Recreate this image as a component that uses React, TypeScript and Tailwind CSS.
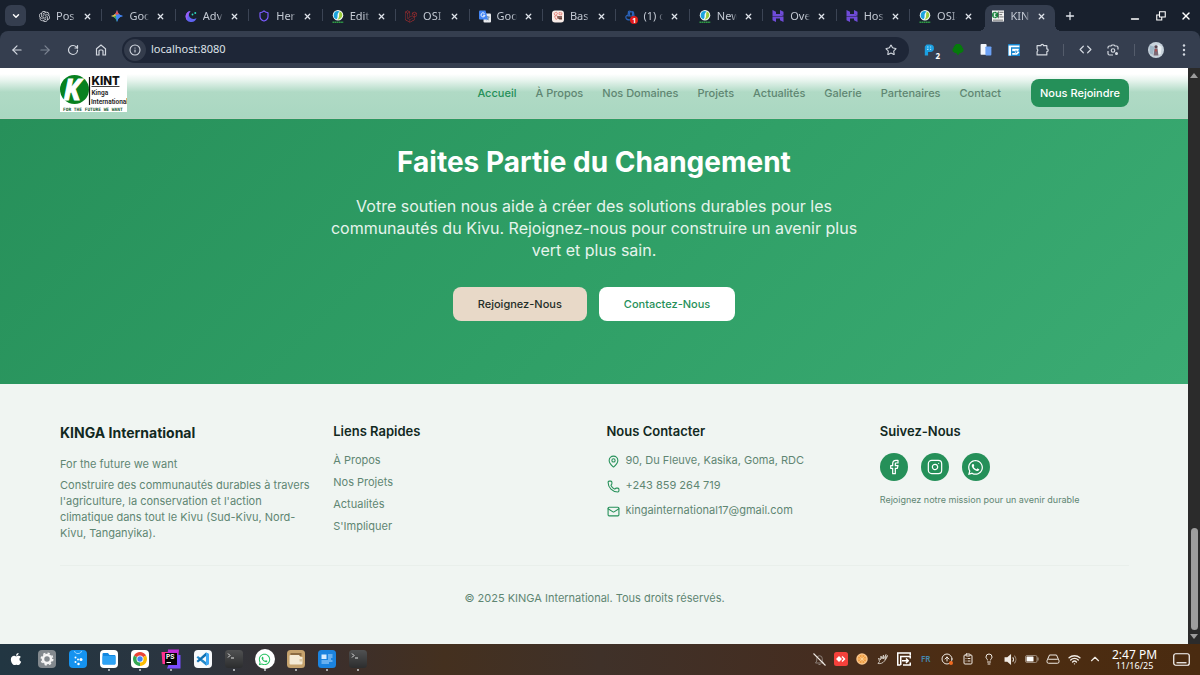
import type { ReactNode } from "react";
import {
  ArrowLeft,
  ArrowRight,
  ChevronDown,
  ChevronUp,
  CircleArrowUp,
  ClipboardList,
  Code,
  Facebook,
  Info,
  Instagram,
  Lightbulb,
  Mail,
  MapPin,
  Minus,
  Phone,
  Plus,
  RotateCw,
  Shield,
  Star,
  Wifi,
  X,
} from "lucide-react";
import { FaApple, FaWhatsapp } from "react-icons/fa";
import { SiLaravel, SiOpenai } from "react-icons/si";

/* ---------- favicons ---------- */

const GeminiMark = () => (
  <svg viewBox="0 0 24 24" className="size-3">
    <defs>
      <clipPath id="spark">
        <path d="M12 0c1.500 7 5 10.500 12 12-7 1.500-10.500 5-12 12-1.500-7-5-10.500-12-12 7-1.500 10.500-5 12-12z" />
      </clipPath>
    </defs>
    <g clipPath="url(#spark)">
      <rect width="24" height="24" fill="#4285f4" />
      <path d="M0 0h24L12 12z" fill="#ea4f4a" />
      <path d="M0 0l12 12L4 16H0z" fill="#f2bd2c" />
      <path d="M0 15l12-4v13H0z" fill="#36a853" />
      <path d="M9 9h15v15H12z" fill="#4285f4" />
    </g>
  </svg>
);

const MoonMark = () => (
  <svg viewBox="0 0 24 24" className="size-[13px]">
    <path d="M11 1a11 11 0 1 0 12 14A9 9 0 0 1 11 1z" fill="#5f63f0" />
    <path d="M3 6a11 11 0 0 0 2 14c-1-6 0-11 6-19-3 0-6 2-8 5z" fill="#9a5cf6" />
    <circle cx="15" cy="8" r="1.800" fill="#2dd4bf" />
    <circle cx="20.500" cy="5" r="2" fill="#2dd4bf" />
  </svg>
);

const OsiMark = () => (
  <svg viewBox="0 0 24 26" className="h-[13px] w-3">
    <circle cx="12" cy="10.500" r="10.500" fill="#f4faf6" />
    <path d="M12 2a8.500 8.500 0 0 0-3 16.500c2-2 2-4 2-6 0-4 1-7 4-9.500z" fill="#1ba3dd" />
    <path d="M15.500 3c4 2 5.500 5 5 8.500S16 19 11 19.500c5-5 2-10 4.500-16.500z" fill="#9ccb3b" />
    <path d="M1 24.500h22" stroke="#2f9a45" strokeWidth="2.600" strokeDasharray="3.500 0.800" />
  </svg>
);

const TranslateMark = () => (
  <svg viewBox="0 0 24 24" className="size-[13px]">
    <rect x="9" y="6" width="15" height="18" rx="2" fill="#e8eaed" />
    <path d="M14 13h7M17.500 11v2M20 13c-1 4-3 5-5 6M15 14c1 3 3 4 5 5" stroke="#5f7f95" strokeWidth="1.500" fill="none" />
    <path d="M2 0h11l5 18H2a2 2 0 0 1-2-2V2a2 2 0 0 1 2-2z" fill="#4285f4" />
    <path d="M11 6a4 4 0 1 0 1 3.500H8" stroke="#fff" strokeWidth="1.800" fill="none" />
  </svg>
);

const BasMark = () => (
  <svg viewBox="0 0 24 24" className="size-[13px]">
    <rect width="24" height="24" rx="6" fill="#f8ece8" />
    <path d="M4 6l5-3 2 4-5 3zM5 12l5-2 2 5-4 3zM14 4l6 1-1 4-5-1z" fill="none" stroke="#e05b4d" strokeWidth="1.200" />
    <path d="M11 11h9v7h-5l-4-3z" fill="#6b4038" />
    <path d="M13 13h2M17 13h2" stroke="#fff" strokeWidth="1.500" />
  </svg>
);

const AlertMark = () => (
  <span className="relative block size-3">
    <svg viewBox="0 0 24 24" className="size-3">
      <path
        d="M7 3c3-2 4 0 5 1 1-1 4-2 5 1l1 7H6zM6 10c-5 1-5 5-3 8 2 2 6 2 9 2M9 4v9M15 4v9"
        fill="none"
        stroke="#2a62b8"
        strokeWidth="2.400"
      />
    </svg>
    <b className="absolute -right-px -bottom-0.5 flex size-2 items-center justify-center rounded-full bg-[#e01b1b] text-[7px] leading-none text-white">
      1
    </b>
  </span>
);

const HostMark = () => (
  <svg viewBox="0 0 24 24" className="size-3">
    <path d="M1 0l7 3.500V8h9l6 4H1zM16 0l7 3.500V11l-7-3.500zM1 13h22v11l-7-3.500V17H8l0 7-7-3.500z" fill="#6f4bd8" />
  </svg>
);

const KintIcon = () => (
  <svg viewBox="0 0 26 24" className="h-3 w-[13px]">
    <rect width="26" height="24" fill="#f4f4f4" />
    <circle cx="7" cy="10" r="7" fill="#16803c" />
    <path d="M5 5v10M10 5l-5 5 5 5" stroke="#fff" strokeWidth="2" fill="none" />
    <path d="M14 2v15M16 4h9M16 9h6M16 14h9M2 21h22" stroke="#444" strokeWidth="1.600" />
  </svg>
);

/* ---------- browser chrome ---------- */

type Tab = { title: string; icon: ReactNode };

const tabs: Tab[] = [
  { title: "Pos", icon: <SiOpenai className="size-[11px] text-[#d8dbe0]" /> },
  { title: "Goo", icon: <GeminiMark /> },
  { title: "Adv", icon: <MoonMark /> },
  { title: "Her", icon: <Shield className="size-[14px] text-[#7c5cff]" strokeWidth={2.4} /> },
  { title: "Edit", icon: <OsiMark /> },
  { title: "OSI", icon: <SiLaravel className="size-[13px] text-[#c9302f]" /> },
  { title: "Goo", icon: <TranslateMark /> },
  { title: "Bas", icon: <BasMark /> },
  { title: "(1) c", icon: <AlertMark /> },
  { title: "New", icon: <OsiMark /> },
  { title: "Ove", icon: <HostMark /> },
  { title: "Hos", icon: <HostMark /> },
  { title: "OSI-", icon: <OsiMark /> },
  { title: "KIN", icon: <KintIcon /> },
];

function TabItem({ tab, active, divider }: { tab: Tab; active: boolean; divider: boolean }) {
  return (
    <div className="relative flex h-full flex-1 items-end px-0.5">
      <div
        className={
          active
            ? "flex h-[26px] flex-1 items-center gap-1.5 rounded-t-lg bg-[#353e4f] pb-1 pl-[7px]"
            : "flex h-[26px] flex-1 items-center gap-1.5 pb-1 pl-[7px]"
        }
      >
        <span className="flex w-3 shrink-0 justify-center">{tab.icon}</span>
        <span className="w-5 overflow-hidden whitespace-nowrap [mask-image:linear-gradient(to_right,black_75%,transparent)]">
          {tab.title}
        </span>
        <button aria-label="Close tab" className="ml-px">
          <X className="size-[9px] text-[#dfe3ea]" strokeWidth={3.4} />
        </button>
      </div>
      {divider && <span className="absolute right-0 bottom-2.5 h-3 w-px bg-[#3b4454]" />}
      {active && (
        <>
          <span className="absolute bottom-0 -left-1 size-1.5 bg-[radial-gradient(circle_at_0_0,transparent_6px,#353e4f_6px)]" />
          <span className="absolute -right-1 bottom-0 size-1.5 bg-[radial-gradient(circle_at_100%_0,transparent_6px,#353e4f_6px)]" />
        </>
      )}
    </div>
  );
}

function TabStrip() {
  return (
    <div className="flex h-[31px] items-center bg-[#18202d] text-[11px] text-[#c3c9d3]">
      <div className="w-[29px] shrink-0 pl-[5px]">
        <button aria-label="Search tabs" className="flex size-[21px] items-center justify-center rounded-md bg-[#353e4f]">
          <ChevronDown className="size-2.5 text-white" strokeWidth={3.4} />
        </button>
      </div>
      <div className="flex h-full flex-1">
        {tabs.map((tab, i) => (
          <TabItem key={i} tab={tab} active={i === tabs.length - 1} divider={i < tabs.length - 2} />
        ))}
      </div>
      <div className="flex w-[143px] shrink-0 items-center text-white">
        <button aria-label="New tab" className="flex w-[26px] justify-center">
          <Plus className="size-3 text-[#dfe3ea]" strokeWidth={2.6} />
        </button>
        <div className="mr-px ml-auto flex w-[77px]">
          <button aria-label="Minimize" className="flex flex-1 justify-center pt-1.5">
            <Minus className="size-3" strokeWidth={2.6} />
          </button>
          <button aria-label="Restore" className="flex flex-1 items-center justify-center">
            <svg viewBox="0 0 20 20" className="size-2.5" fill="none" stroke="currentColor" strokeWidth="2.200">
              <path d="M7 1.500h11.500V12H7zM6.500 8H1.500v10h10v-5" />
            </svg>
          </button>
          <button aria-label="Close" className="flex flex-1 items-center justify-center">
            <X className="size-3" strokeWidth={2.8} />
          </button>
        </div>
      </div>
    </div>
  );
}

function ToolButton({ label, children }: { label: string; children: ReactNode }) {
  return (
    <button aria-label={label} className="flex h-6 w-7 shrink-0 items-center justify-center">
      {children}
    </button>
  );
}

function Toolbar() {
  return (
    <div className="bg-[#18202d]">
      <div className="flex h-[37px] items-center rounded-t-lg bg-[#353e4f] pr-0.5 pl-[3px] text-[#d3d8e0]">
        <ToolButton label="Back">
          <ArrowLeft className="size-[14px]" strokeWidth={2} />
        </ToolButton>
        <ToolButton label="Forward">
          <ArrowRight className="size-[14px] text-[#7d8593]" strokeWidth={2} />
        </ToolButton>
        <ToolButton label="Reload">
          <RotateCw className="size-3" strokeWidth={2.4} />
        </ToolButton>
        <ToolButton label="Home">
          <svg viewBox="0 0 24 24" className="size-3" fill="none" stroke="currentColor" strokeWidth="2.400">
            <path d="M3 9.500L12 2l9 7.500V22h-5v-8a2 2 0 0 0-2-2h-4a2 2 0 0 0-2 2v8H3z" />
          </svg>
        </ToolButton>
        <div className="mx-[7px] flex h-[26px] flex-1 items-center rounded-full bg-[#1e2637] pr-3 pl-0.5">
          <span className="flex size-[22px] items-center justify-center rounded-full bg-[#343c4c]">
            <Info className="size-3" strokeWidth={2.2} />
          </span>
          <input
            aria-label="Address"
            defaultValue="localhost:8080"
            className="ml-[5px] min-w-0 flex-1 bg-transparent text-[11px] text-[#dde1e8] outline-none"
          />
          <button aria-label="Bookmark">
            <Star className="size-3" strokeWidth={2.2} />
          </button>
        </div>
        <button aria-label="P extension" className="relative flex h-6 w-7 items-center justify-center">
          <svg viewBox="0 0 20 20" className="mr-0.5 size-3">
            <path d="M6 1h6a6 6 0 0 1 0 12.500H8.500V19H3V4z" fill="#1ba0e2" />
            <path d="M7 5h2M12 5h1.500M7 9h2M12 9h1.500" stroke="#cfeeff" strokeWidth="1.800" />
          </svg>
          <b className="absolute right-1 bottom-0.5 text-[8px] leading-none text-white">2</b>
        </button>
        <ToolButton label="Tree extension">
          <svg viewBox="0 0 20 20" className="size-3" fill="#067a0c">
            <path d="M7 0h6l4 4v2l2 2v4l-4 3h-2l-3 4-3-4H5l-4-3V8l2-2V4z" />
          </svg>
        </ToolButton>
        <ToolButton label="Pages extension">
          <svg viewBox="0 0 20 20" className="size-3">
            <rect x="1" y="0" width="10" height="18" rx="1.500" fill="#f3f6fb" />
            <rect x="9" y="4" width="10" height="15" rx="1.500" fill="#6ba1f5" />
          </svg>
        </ToolButton>
        <ToolButton label="Forms extension">
          <svg viewBox="0 0 20 20" className="size-3">
            <rect width="20" height="20" rx="1" fill="#1686cf" />
            <path d="M1 2.500h18v3H5V19H1z" fill="#fff" />
            <path d="M7 8h11v3h-2l3 3-4 4H7v-3h4l1-1-2-2H7z" fill="#fff" />
            <path d="M8 13h7M13 10.500l2.500 2.500-2.500 2.500" stroke="#1686cf" strokeWidth="1.400" fill="none" />
          </svg>
        </ToolButton>
        <ToolButton label="Extensions">
          <svg viewBox="0 0 24 24" className="size-[13px]" fill="none" stroke="currentColor" strokeWidth="2.200">
            <path d="M2 5h7a2.500 2.500 0 0 1 5 0h6v6a2.500 2.500 0 0 1 0 5v6H2v-6a3 3 0 0 0 0-5z" strokeLinejoin="round" />
          </svg>
        </ToolButton>
        <span className="mx-[7px] h-3 w-px bg-[#545c6b]" />
        <ToolButton label="Developer tools">
          <Code className="size-[13px]" strokeWidth={2.2} />
        </ToolButton>
        <ToolButton label="Search with lens">
          <svg viewBox="0 0 24 24" className="size-3" fill="none" stroke="currentColor" strokeWidth="2.400">
            <path d="M2 9V7a3 3 0 0 1 3-3h3l2-2h4l2 2h3a3 3 0 0 1 3 3v4M2 14v5a3 3 0 0 0 3 3h7" />
            <circle cx="12" cy="13" r="3.500" />
            <circle cx="19" cy="19" r="1.800" fill="currentColor" />
          </svg>
        </ToolButton>
        <span className="mx-[7px] h-3 w-px bg-[#545c6b]" />
        <ToolButton label="Profile">
          <svg viewBox="0 0 20 20" className="size-4">
            <circle cx="10" cy="10" r="10" fill="#c8d3dc" />
            <path d="M2 4l6 2-2 10-4-2z" fill="#9fb6c6" />
            <path d="M12 3l5 3-1 9-4 1z" fill="#e9f0f4" />
            <circle cx="10" cy="6" r="2" fill="#584450" />
            <path d="M8 8h4l1 9H7z" fill="#7c6a76" />
            <path d="M9 9h2v3H9z" fill="#b64a4a" />
          </svg>
        </ToolButton>
        <ToolButton label="Menu">
          <svg viewBox="0 0 12 12" className="size-3" fill="currentColor">
            <circle cx="6" cy="1.500" r="1.200" />
            <circle cx="6" cy="6" r="1.200" />
            <circle cx="6" cy="10.500" r="1.200" />
          </svg>
        </ToolButton>
      </div>
    </div>
  );
}

/* ---------- site ---------- */

const Logo = () => (
  <svg viewBox="0 0 134 76" className="h-[38px] w-[67px]" role="img" aria-label="KINT">
    <rect width="134" height="76" fill="#fff" />
    <circle cx="29" cy="31" r="29" fill="#08811f" />
    <text x="7" y="51" fontSize="56" fontWeight="700" fontStyle="italic" fill="#fff" stroke="#fff" strokeWidth="2" fontFamily="Open Sans, sans-serif">
      K
    </text>
    <path d="M59 6v56" stroke="#111" strokeWidth="2.400" />
    <text x="63" y="21" fontSize="23" fontWeight="800" fill="#111" fontFamily="Inter, sans-serif">
      KINT
    </text>
    <path d="M63 25h56" stroke="#111" strokeWidth="1.600" />
    <g fontFamily="Roboto, sans-serif" fontSize="13" fontWeight="600" fill="#1c1c1c">
      <text x="63" y="42">Kinga</text>
      <text x="62" y="59">International</text>
    </g>
    <text x="6" y="73" fontSize="9" fontWeight="700" fill="#14532d" fontFamily="DejaVu Sans Mono, monospace">
      FOR THE FUTURE WE WANT
    </text>
  </svg>
);

const navLinks = ["À Propos", "Nos Domaines", "Projets", "Actualités", "Galerie", "Partenaires", "Contact"];

function SiteHeader() {
  return (
    <header className="border-b border-[#b6d3c1] bg-[linear-gradient(to_bottom,#ffffff_12%,#e9f5ef_24%,#b0dac5_48%,#a9d7c1_100%)]">
      <div className="flex h-[50px] items-center pr-[59px] pl-[60px]">
        <a href="#accueil">
          <Logo />
        </a>
        <nav className="ml-auto flex items-center gap-[19px] text-[11px] font-medium text-[#5f8672]">
          <a href="#accueil" className="text-[#259059]">
            Accueil
          </a>
          {navLinks.map((link) => (
            <a key={link} href="#page">
              {link}
            </a>
          ))}
        </nav>
        <a
          href="#rejoindre"
          className="ml-[30px] flex h-7 items-center rounded-lg bg-[#259059] px-[9px] text-[11px] font-medium text-white"
        >
          Nous Rejoindre
        </a>
      </div>
    </header>
  );
}

function Hero() {
  return (
    <section className="flex flex-col items-center bg-[linear-gradient(135deg,#27905a,#2f9f66_50%,#3bab73)] px-6 pt-[25px] pb-[63px] text-center">
      <h1 className="text-[28px] leading-9 font-bold text-white">Faites Partie du Changement</h1>
      <p className="mt-[15px] max-w-[540px] text-base leading-[22px] text-[#e6f4ec]">
        Votre soutien nous aide à créer des solutions durables pour les communautés du Kivu. Rejoignez-nous pour
        construire un avenir plus vert et plus sain.
      </p>
      <div className="mt-[26px] flex gap-3 text-[11px] font-medium">
        <a href="#rejoindre" className="flex h-[34px] items-center rounded-lg bg-[#e8d9c8] px-[25px] text-[#1f2d27]">
          Rejoignez-Nous
        </a>
        <a href="#contact" className="flex h-[34px] items-center rounded-lg bg-white px-[25px] text-[#259059]">
          Contactez-Nous
        </a>
      </div>
    </section>
  );
}

function SiteFooter() {
  const social = "flex size-7 items-center justify-center rounded-full bg-[#259059] text-white";
  const heading = "text-[13px] leading-[14px] font-semibold text-[#12291f]";
  return (
    <footer className="flex-1 bg-[#f0f5f2] pt-10 pr-[59px] pb-9 pl-[60px] text-[11px] text-[#5f8672]">
      <div className="grid grid-cols-4 gap-6">
        <section>
          <h2 className="text-sm leading-[18px] font-bold text-[#12291f]">KINGA International</h2>
          <p className="mt-[14px] leading-4">For the future we want</p>
          <p className="-mr-2 mt-[5px] leading-4">
            Construire des communautés durables à travers l'agriculture, la conservation et l'action climatique dans tout
            le Kivu (Sud-Kivu, Nord-Kivu, Tanganyika).
          </p>
        </section>
        <section>
          <h3 className={heading}>Liens Rapides</h3>
          <ul className="mt-[14px] flex flex-col gap-1.5 leading-4">
            {["À Propos", "Nos Projets", "Actualités", "S'Impliquer"].map((item) => (
              <li key={item}>
                <a href="#page">{item}</a>
              </li>
            ))}
          </ul>
        </section>
        <section>
          <h3 className={heading}>Nous Contacter</h3>
          <ul className="mt-[14px] flex flex-col gap-[9px] leading-4">
            <li className="flex gap-1.5">
              <MapPin className="mt-[3px] size-[13px] text-[#259059]" />
              90, Du Fleuve, Kasika, Goma, RDC
            </li>
            <li className="flex gap-1.5">
              <Phone className="mt-[3px] size-[13px] text-[#259059]" />
              +243 859 264 719
            </li>
            <li className="flex gap-1.5">
              <Mail className="mt-[3px] size-[13px] text-[#259059]" />
              kingainternational17@gmail.com
            </li>
          </ul>
        </section>
        <section>
          <h3 className={heading}>Suivez-Nous</h3>
          <div className="mt-[15px] flex gap-[13px]">
            <a href="#facebook" aria-label="Facebook" className={social}>
              <Facebook className="size-4" strokeWidth={1.8} />
            </a>
            <a href="#instagram" aria-label="Instagram" className={social}>
              <Instagram className="size-4" strokeWidth={1.8} />
            </a>
            <a href="#whatsapp" aria-label="WhatsApp" className={social}>
              <FaWhatsapp className="size-[17px]" />
            </a>
          </div>
          <p className="mt-[13px] text-[9px] leading-3">Rejoignez notre mission pour un avenir durable</p>
        </section>
      </div>
      <p className="mt-6 border-t border-[#e9efeb] pt-6 text-center leading-4">
        © 2025 KINGA International. Tous droits réservés.
      </p>
    </footer>
  );
}

function Scrollbar() {
  return (
    <div className="flex w-3 shrink-0 flex-col items-center bg-[#2b2b2b] py-[5px]">
      <svg viewBox="0 0 8 5" className="h-[5px] w-2" fill="#9d9d9d">
        <path d="M4 0l4 5H0z" />
      </svg>
      <span className="mt-auto mb-1 h-[102px] w-[7px] rounded-full bg-[#9d9d9d]" />
      <svg viewBox="0 0 8 5" className="h-[5px] w-2" fill="#9d9d9d">
        <path d="M4 5l4-5H0z" />
      </svg>
    </div>
  );
}

/* ---------- taskbar ---------- */

const TerminalIcon = () => (
  <svg viewBox="0 0 36 36" className="size-[18px]">
    <defs>
      <linearGradient id="term" x1="0" y1="0" x2="0" y2="1">
        <stop offset="0" stopColor="#505152" />
        <stop offset="1" stopColor="#2c2d2e" />
      </linearGradient>
    </defs>
    <rect width="36" height="36" rx="7" fill="url(#term)" />
    <path d="M6 7l4 4-4 4M12 16h6" stroke="#e4e4e4" strokeWidth="2" fill="none" />
  </svg>
);

const apps: { name: string; running: boolean; icon: ReactNode }[] = [
  { name: "Apple menu", running: false, icon: <FaApple className="size-[14px] text-white" /> },
  {
    name: "Settings",
    running: false,
    icon: (
      <svg viewBox="0 0 36 36" className="size-[18px]">
        <rect width="36" height="36" rx="8" fill="#83898e" />
        <circle cx="18" cy="18" r="8" fill="none" stroke="#f5f5f5" strokeWidth="5" />
        <circle cx="18" cy="18" r="11.500" fill="none" stroke="#f5f5f5" strokeWidth="3" strokeDasharray="4.500 4.500" />
      </svg>
    ),
  },
  {
    name: "Store",
    running: false,
    icon: (
      <svg viewBox="0 0 36 36" className="size-[18px]">
        <rect width="36" height="36" rx="8" fill="#1593f0" />
        <path d="M11 2c1 7 13 7 14 0" stroke="#9bd5ff" strokeWidth="2" fill="none" />
        <g fill="#fff">
          <circle cx="13" cy="15" r="2" />
          <circle cx="18" cy="19" r="2" />
          <circle cx="24" cy="19" r="3" />
          <circle cx="13" cy="24" r="2" />
          <circle cx="19" cy="28" r="2.500" />
        </g>
      </svg>
    ),
  },
  {
    name: "Files",
    running: true,
    icon: (
      <svg viewBox="0 0 36 36" className="size-[18px]">
        <rect width="36" height="36" rx="8" fill="#fff" />
        <path d="M5 8a2 2 0 0 1 2-2h9l3 4h10a2 2 0 0 1 2 2v15a2 2 0 0 1-2 2H7a2 2 0 0 1-2-2z" fill="#1287e0" />
        <rect x="5" y="12" width="26" height="17" rx="2" fill="#2ca2f5" />
      </svg>
    ),
  },
  {
    name: "Chrome",
    running: true,
    icon: (
      <svg viewBox="0 0 36 36" className="size-[18px]">
        <rect width="36" height="36" rx="8" fill="#fff" />
        <path d="M18 18L5.900 11A14 14 0 0 1 30.100 11z" fill="#ea4335" />
        <path d="M18 18L30.100 11A14 14 0 0 1 18 32z" fill="#fbbc04" />
        <path d="M18 18v14A14 14 0 0 1 5.900 11z" fill="#34a853" />
        <circle cx="18" cy="18" r="7" fill="#fff" />
        <circle cx="18" cy="18" r="5.400" fill="#4285f4" />
      </svg>
    ),
  },
  {
    name: "PhpStorm",
    running: true,
    icon: (
      <svg viewBox="0 0 40 40" className="size-5">
        <path d="M1 6h16v24H3z" fill="#ff318c" />
        <path d="M14 1h22l-2 20H12z" fill="#c32bd8" />
        <path d="M20 12h19v27H12l4-10z" fill="#7a4dff" />
        <rect x="8" y="8" width="24" height="24" fill="#050505" />
        <text x="10" y="20" fontSize="13" fontWeight="700" fill="#fff" fontFamily="Inter, sans-serif">
          PS
        </text>
        <path d="M11 27h9" stroke="#fff" strokeWidth="2" />
      </svg>
    ),
  },
  {
    name: "VS Code",
    running: false,
    icon: (
      <svg viewBox="0 0 36 36" className="size-[18px]">
        <rect width="36" height="36" rx="8" fill="#f7f9fb" />
        <path d="M24 5l6 3v20l-6 3L5 15l3-3 16 12z" fill="#2489ca" />
        <path d="M24 5v7L8 25l-3-3z" fill="#1070b3" />
        <path d="M24 5l6 3v20l-6 3z" fill="#3fa9f5" />
      </svg>
    ),
  },
  { name: "Terminal", running: true, icon: <TerminalIcon /> },
  {
    name: "WhatsApp",
    running: true,
    icon: (
      <span className="flex size-5 items-center justify-center rounded-full bg-white">
        <FaWhatsapp className="size-[13px] text-[#22c15e]" />
      </span>
    ),
  },
  {
    name: "Archive",
    running: true,
    icon: (
      <svg viewBox="0 0 36 36" className="size-[18px]">
        <rect width="36" height="36" rx="7" fill="#c6a26d" />
        <path d="M7 6h22v6H7z" fill="#8c6b42" />
        <path d="M5 12a2 2 0 0 1 2-2h17l3 4h4v13a2 2 0 0 1-2 2H7a2 2 0 0 1-2-2z" fill="#f5ead5" />
        <path d="M25 18h6v5h-6z" fill="#dcc8a2" />
      </svg>
    ),
  },
  {
    name: "Notes",
    running: true,
    icon: (
      <svg viewBox="0 0 36 36" className="size-[18px]">
        <rect width="36" height="36" rx="7" fill="#1b83df" />
        <rect x="7" y="9" width="10" height="9" fill="#d7ecff" />
        <path d="M20 10h9M20 14h9M20 18h6M7 22h22M7 26h15" stroke="#b3dbff" strokeWidth="2" />
      </svg>
    ),
  },
  { name: "Console", running: true, icon: <TerminalIcon /> },
];

const tray: { name: string; icon: ReactNode }[] = [
  {
    name: "Notifications off",
    icon: (
      <svg viewBox="0 0 26 26" className="size-[13px]" fill="none">
        <path d="M5 20h16l-2.500-4v-5a5.500 5.500 0 0 0-11 0v5zM11 23h4" stroke="#8c8078" strokeWidth="2" />
        <path d="M1 1l24 24" stroke="#efe9e2" strokeWidth="2.200" />
      </svg>
    ),
  },
  {
    name: "Remote desktop",
    icon: (
      <svg viewBox="0 0 28 28" className="size-[14px]">
        <rect width="28" height="28" rx="5" fill="#f5413b" />
        <path d="M10 8l6 6-6 6-6-6z" fill="#fff" />
        <path d="M17 8l6 6-6 6-2-2 4-4-4-4z" fill="#fff" />
      </svg>
    ),
  },
  {
    name: "Orange",
    icon: (
      <svg viewBox="0 0 24 24" className="size-3">
        <circle cx="12" cy="12" r="11.500" fill="#f9c489" />
        <circle cx="12" cy="12" r="8.500" fill="#ee9b40" />
        <path d="M12 4v16M4 12h16M6.500 6.500l11 11M17.500 6.500l-11 11" stroke="#ffdca6" strokeWidth="1.200" />
      </svg>
    ),
  },
  {
    name: "Gestures",
    icon: (
      <svg viewBox="0 0 24 24" className="size-3" fill="none" stroke="#d6cec5" strokeWidth="1.800">
        <path d="M2 21c5 1 10-1 13-5 3-3 5-7 6-11l-5 8 2-10-5 9V4l-3 8-2-6-1 8-4-4 2 7z" />
      </svg>
    ),
  },
  {
    name: "Input",
    icon: (
      <svg viewBox="0 0 28 28" className="size-[14px]" fill="none" stroke="#fff" strokeWidth="3">
        <path d="M26.500 7V2h-25v24H7M7.500 26V9h19v4M26.500 21v5H12M10 17.500h12M18 13l4.500 4.500L18 22" />
      </svg>
    ),
  },
  { name: "Keyboard layout", icon: <span className="text-[8px] font-semibold text-[#4588b0]">FR</span> },
  {
    name: "Updates",
    icon: (
      <span className="relative block">
        <CircleArrowUp className="size-3" />
        <span className="absolute right-0 bottom-0 size-1 rounded-full bg-[#f06a21]" />
      </span>
    ),
  },
  { name: "Clipboard", icon: <ClipboardList className="size-3" /> },
  { name: "Night light", icon: <Lightbulb className="size-3" /> },
  {
    name: "Volume",
    icon: (
      <svg viewBox="0 0 24 24" className="size-[13px]" fill="currentColor">
        <path d="M1 8h5l7-6v20l-7-6H1z" />
        <path d="M16 8c2 2 2 6 0 8" stroke="currentColor" strokeWidth="2" fill="none" />
        <path d="M19 5c4 4 4 10 0 14" stroke="#9c8b7b" strokeWidth="2" fill="none" />
      </svg>
    ),
  },
  {
    name: "Battery",
    icon: (
      <svg viewBox="0 0 28 16" className="h-2 w-[14px]">
        <rect x="1" y="1" width="23" height="14" rx="3" fill="none" stroke="#b3a698" strokeWidth="1.500" />
        <rect x="3" y="3" width="14" height="10" rx="1" fill="#fff" />
        <path d="M26 5v6" stroke="#b3a698" strokeWidth="2" />
      </svg>
    ),
  },
  {
    name: "Drive",
    icon: (
      <svg viewBox="0 0 28 24" className="h-3 w-[14px]" fill="none" stroke="currentColor" strokeWidth="2">
        <path d="M3 13L7 4h14l4 9" />
        <rect x="2" y="12.500" width="24" height="8" rx="3" />
      </svg>
    ),
  },
  { name: "Network", icon: <Wifi className="size-[13px]" strokeWidth={2.6} /> },
  { name: "Show hidden icons", icon: <ChevronUp className="size-[14px]" /> },
];

function Taskbar() {
  return (
    <div className="flex h-[31px] items-center bg-[linear-gradient(to_right,#223642,#2b3540_15%,#3b2f2d_27%,#44301f_37%,#3f3129_50%,#452d20_68%,#4d2d12_80%,#4a2b10)] pb-px text-white">
      <div className="grid w-[374px] shrink-0 grid-cols-12">
        {apps.map((app) => (
          <button key={app.name} aria-label={app.name} className="relative flex h-[30px] items-center justify-center">
            {app.icon}
            {app.running && <span className="absolute bottom-[3px] size-0.5 rounded-full bg-[#cfd3d6]" />}
          </button>
        ))}
      </div>
      <div className="ml-auto grid w-[297px] shrink-0 grid-cols-14 text-[#f1ebe4]">
        {tray.map((item) => (
          <button key={item.name} aria-label={item.name} className="flex h-6 items-center justify-center">
            {item.icon}
          </button>
        ))}
      </div>
      <div className="w-[57px] shrink-0 text-center">
        <div className="text-xs leading-[13px]">2:47 PM</div>
        <div className="text-[9px] leading-[10px]">11/16/25</div>
      </div>
      <button aria-label="Show desktop" className="flex w-[37px] shrink-0 justify-center">
        <svg viewBox="0 0 34 26" className="h-[13px] w-[17px]" fill="none" stroke="#fff" strokeWidth="2.400">
          <rect x="1.500" y="1.500" width="31" height="23" rx="4" />
          <path d="M7 19.500h20" />
        </svg>
      </button>
    </div>
  );
}

export default function App() {
  return (
    <div className="flex min-h-screen flex-col font-['Noto_Sans',sans-serif]">
      <TabStrip />
      <Toolbar />
      <main className="flex flex-1 font-['Inter',sans-serif]">
        <div className="flex min-w-0 flex-1 flex-col">
          <SiteHeader />
          <Hero />
          <SiteFooter />
        </div>
        <Scrollbar />
      </main>
      <Taskbar />
    </div>
  );
}
